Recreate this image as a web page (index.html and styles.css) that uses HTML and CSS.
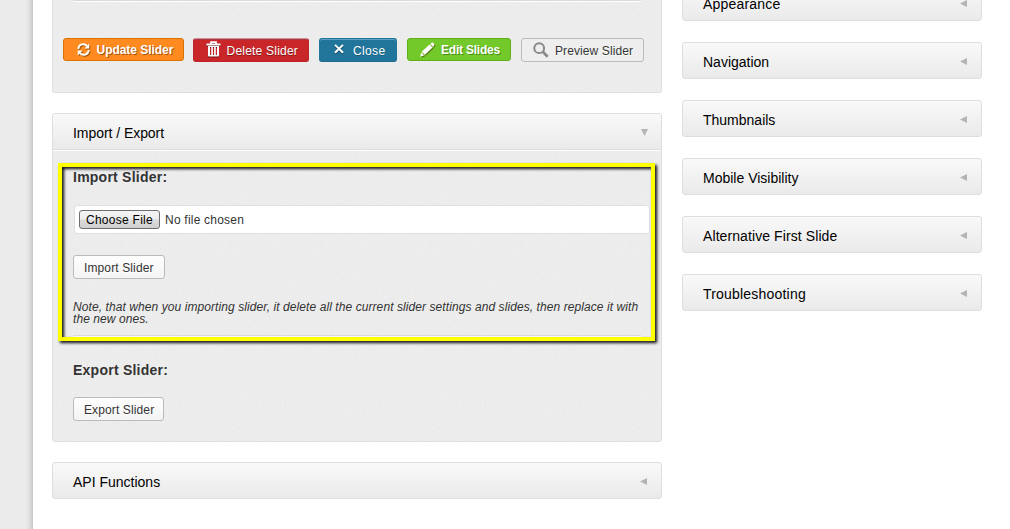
FILE: index.html
```html
<!DOCTYPE html>
<html lang="en">
<head>
<meta charset="utf-8">
<title>Slider Settings</title>
<link rel="stylesheet" href="styles.css">
</head>
<body>
<div class="page">
  <div class="gutter"></div>
  <main class="main">
    <section class="panel actions">
      <hr class="rule">
      <div class="toolbar">
        <a class="btn update"><svg class="i-refresh" viewBox="0 0 14 14"><path d="M1.5 6.4A5.2 5 0 0 1 10.9 3.4M12.5 7.6A5.2 5 0 0 1 3.1 10.6" fill="none" stroke="currentColor" stroke-width="2"/><path d="M13.2 .6v5.2H8zM.8 13.4V8.2H6z" fill="currentColor"/></svg><span>Update Slider</span></a>
        <a class="btn delete"><svg class="i-trash" viewBox="0 0 15 16"><path d="M5 2.6V1.2h5v1.4M.5 3.5h14" fill="none" stroke="currentColor" stroke-width="1.8"/><path fill="currentColor" fill-rule="evenodd" d="M2 5h11v9.5q0 1-1 1H3q-1 0-1-1zM4 6v8h1.2V6zM6.9 6v8h1.2V6zM9.8 6v8H11V6z"/></svg><span>Delete Slider</span></a>
        <a class="btn close"><svg class="i-x" viewBox="0 0 10 10"><path d="M1 .9L9 8.7M9 .9L1 8.7" fill="none" stroke="currentColor" stroke-width="2"/></svg><span>Close</span></a>
        <a class="btn edit"><svg class="i-pencil" viewBox="0 0 16 16"><path fill="currentColor" d="M10.2 2.7l3.2 3.2-8.1 7.7-3.5-3.3zM11 2L12.4.7q.8-.6 1.5 0l1.3 1.3q.6.8 0 1.5L14 5zM1.2 11.2l3.3 3L.3 15.7z"/></svg><span>Edit Slides</span></a>
        <a class="btn preview"><svg class="i-search" viewBox="0 0 16 16"><circle cx="6.2" cy="6.2" r="4.9" fill="none" stroke="currentColor" stroke-width="2"/><path d="M9.8 9.8l4.9 5" stroke="currentColor" stroke-width="2.7"/></svg><span>Preview Slider</span></a>
      </div>
    </section>

    <section class="panel import">
      <h3 class="head"><span>Import / Export</span><svg class="arrow" viewBox="0 0 7 7"><path d="M0 0h7L3.5 7z"/></svg></h3>
      <div class="body">
        <h4 class="title">Import Slider:</h4>
        <div class="file"><button class="choose">Choose File</button><span class="nofile">No file chosen</span></div>
        <a class="btn light imp"><span>Import Slider</span></a>
        <p class="note">Note, that when you importing slider, it delete all the current slider settings and slides, then replace it with<br>the new ones.</p>
        <hr class="rule">
        <h4 class="title export">Export Slider:</h4>
        <a class="btn light exp"><span>Export Slider</span></a>
      </div>
      <div class="highlight"></div>
    </section>

    <section class="bar"><span>API Functions</span><svg class="arrow" viewBox="0 0 7 7"><path d="M7 0v7L0 3.5z"/></svg></section>
  </main>
  <aside class="side">
    <section class="bar"><span class="wide">Appearance</span><svg class="arrow" viewBox="0 0 7 7"><path d="M7 0v7L0 3.5z"/></svg></section>
    <section class="bar"><span>Navigation</span><svg class="arrow" viewBox="0 0 7 7"><path d="M7 0v7L0 3.5z"/></svg></section>
    <section class="bar"><span>Thumbnails</span><svg class="arrow" viewBox="0 0 7 7"><path d="M7 0v7L0 3.5z"/></svg></section>
    <section class="bar"><span>Mobile Visibility</span><svg class="arrow" viewBox="0 0 7 7"><path d="M7 0v7L0 3.5z"/></svg></section>
    <section class="bar"><span class="mid">Alternative First Slide</span><svg class="arrow" viewBox="0 0 7 7"><path d="M7 0v7L0 3.5z"/></svg></section>
    <section class="bar"><span class="wide">Troubleshooting</span><svg class="arrow" viewBox="0 0 7 7"><path d="M7 0v7L0 3.5z"/></svg></section>
  </aside>
</div>
</body>
</html>
```
FILE: styles.css
```css
* { box-sizing: border-box; }
body {
  margin: 0;
  background: #fff;
  font-family: "Liberation Sans", Arial, sans-serif;
  font-size: 12px;
  color: #333;
}
.page { display: flex; height: 529px; overflow: hidden; }
.gutter {
  flex: none;
  width: 33px;
  margin-right: 19px;
  background: linear-gradient(to right, #ebebeb 25px, #e2e2e2 29px, #c6c6c6 33px);
}
.main { flex: none; width: 610px; margin-right: 20px; }
.side { flex: none; width: 300px; margin-top: -16px; }

.panel {
  border: 1px solid #dedede;
  border-radius: 3px;
  background: #eee url("data:image/svg+xml,%3Csvg xmlns='http://www.w3.org/2000/svg' width='100' height='100'%3E%3Cfilter id='n'%3E%3CfeTurbulence type='fractalNoise' baseFrequency='.5' numOctaves='2' stitchTiles='stitch'/%3E%3CfeColorMatrix values='0 0 0 0 .4 0 0 0 0 .4 0 0 0 0 .4 .16 0 0 0 -.06'/%3E%3C/filter%3E%3Crect width='100' height='100' filter='url(%23n)'/%3E%3C/svg%3E");
}
.actions { height: 93px; border-top: 0; border-radius: 0 0 3px 3px; padding: 0 20px; }
.rule { height: 2px; margin: 0; border: 0; border-top: 1px solid #dadada; background: #fff; }

.toolbar { display: flex; align-items: flex-start; margin: 36px -10px 0; }
.btn {
  display: flex;
  align-items: center;
  height: 24px;
  border: 1px solid #bbb;
  border-radius: 3px;
  font-size: 12px;
  line-height: 14px;
  white-space: nowrap;
}
.btn svg { flex: none; }
.btn span { position: relative; }
.update {
  width: 121px; height: 23px; padding-left: 13px; margin-right: 9px;
  background: #ff8a1f; border-color: #d87200; color: #fff;
  font-weight: bold; letter-spacing: -.04px; text-shadow: 1px 1px 0 rgba(90, 40, 0, .55);
}
.update svg, .edit svg { filter: drop-shadow(1px 1px 0 rgba(60, 40, 0, .5)); }
.i-refresh { width: 13px; height: 13px; margin-right: 6.5px; }
.delete {
  width: 116px; padding-left: 12px; margin-right: 10px;
  background: #c92629; border-color: #be2427; border-top-color: #d28c94; color: #fff;
  box-shadow: inset 0 1px 0 #a93845;
  text-shadow: 0 1px 0 rgba(0, 0, 0, .4);
  letter-spacing: .22px;
}
.i-trash { width: 15px; height: 16px; margin: -2px 5.5px 0 0; }
.delete svg, .close svg { filter: drop-shadow(0 1px 0 rgba(0, 0, 0, .45)); }
.close {
  width: 78px; padding-left: 14px; margin-right: 10px;
  background: #21759b; border-color: #21759b; border-bottom-color: #1e6a8d; color: #fff;
  box-shadow: inset 0 1px 0 #5aa2c0;
  text-shadow: 0 1px 0 rgba(0, 0, 0, .2);
  letter-spacing: .35px;
}
.i-x { width: 10px; height: 10px; margin: -3px 9px 0 0; }
.edit {
  width: 104px; height: 23px; padding-left: 12px; margin-right: 10px;
  background: #73c92a; border-color: #5fae1c; color: #fff;
  font-weight: bold; letter-spacing: -.22px; text-shadow: 1px 1px 0 rgba(30, 80, 0, .5);
}
.i-pencil { width: 15px; height: 15px; margin-right: 6px; }
.preview { width: 123px; padding-left: 11px; letter-spacing: .1px; text-shadow: 0 1px 0 #fff; background: #eee; }
.i-search { width: 16px; height: 16px; margin: -1px 6px 0 0; color: #888; }
.delete span, .close span, .preview span { top: 1px; }

.import { position: relative; margin-top: 20px; height: 329px; }
.head, .bar {
  display: flex;
  align-items: center;
  justify-content: space-between;
  height: 37px;
  margin: 0;
  padding: 3px 14px 0 20px;
  font-size: 14px;
  font-weight: normal;
  line-height: 18px;
  color: #000;
  background: linear-gradient(#f9f9f9, #eaeaea);
}
.head { height: 36px; padding: 2px 13px 0 20px; letter-spacing: -.05px; border-bottom: 1px solid #dedede; border-radius: 2px 2px 0 0; box-shadow: 0 1px 0 #fff; }
.bar { border: 1px solid #dedede; border-radius: 3px; }
.main .bar { margin-top: 20px; }
.side .bar + .bar { margin-top: 21px; }
.wide { letter-spacing: .2px; }
.mid { letter-spacing: .09px; }
.arrow { width: 7px; height: 7px; margin-top: -2px; fill: #b4b4b4; }
.head .arrow { margin-top: 0; }

.body { padding: 18px 20px 0; }
.title { margin: 0; font-size: 14px; line-height: 18px; letter-spacing: .24px; color: #333; }
.file {
  display: flex;
  align-items: center;
  width: 576px;
  height: 29px;
  margin: 19px 0 0 1px;
  padding-left: 4px;
  background: #fff;
  border: 1px solid #dfdfdf;
  border-radius: 3px;
}
.choose {
  width: 81px; height: 19px; padding: 0;
  border: 1px solid #6e6e6e; border-radius: 3px;
  background: linear-gradient(#f4f4f4, #ededed 48%, #dcdcdc 52%, #cfcfcf);
  font: 12px "Liberation Sans", Arial, sans-serif;
  letter-spacing: .27px;
  color: #000;
}
.nofile { margin-left: 5px; letter-spacing: .22px; }
.light { background: linear-gradient(#fefefe, #f4f4f4); padding-left: 10px; letter-spacing: .12px; text-shadow: 0 1px 0 #fff; }
.light span { top: 1px; }
.imp { width: 92px; margin-top: 21px; }
.note { margin: 22px 0 10px; height: 24px; line-height: 12px; letter-spacing: .08px; font-style: italic; white-space: nowrap; }
.export { margin-top: 24px; }
.exp { width: 91px; margin-top: 18px; }
.highlight {
  position: absolute;
  left: 5px; top: 49px;
  width: 597px; height: 178px;
  border: 4px solid #ff0;
  filter: drop-shadow(2px 2px 1.5px rgba(0, 0, 0, .95));
}
```
